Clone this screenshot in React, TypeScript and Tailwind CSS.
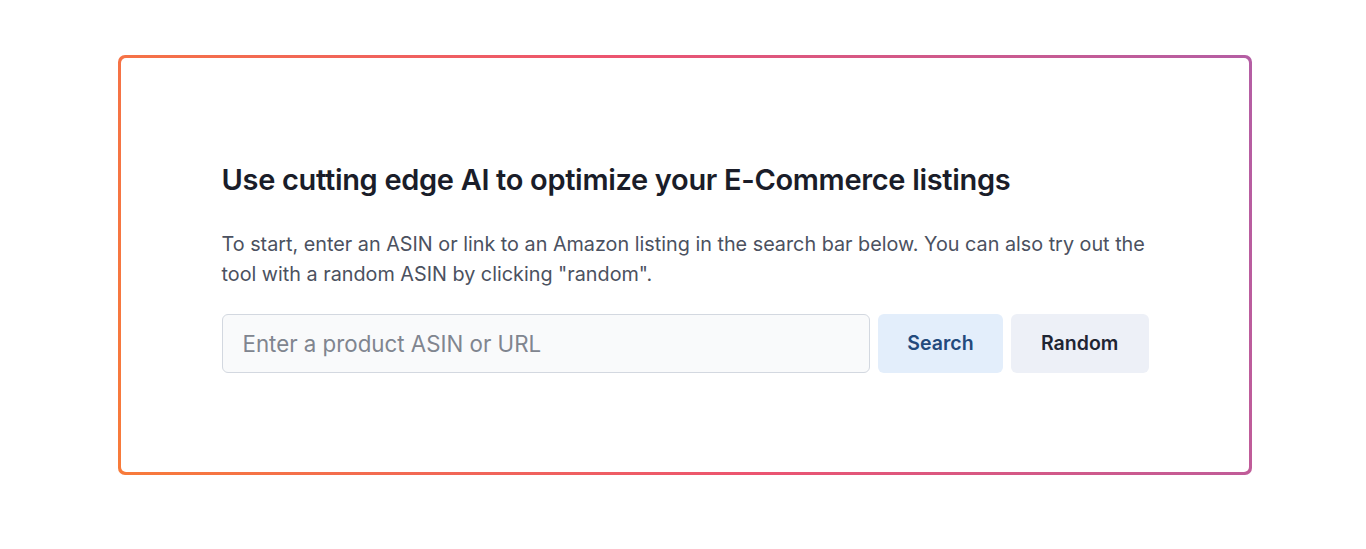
import React from 'react';

export default function App() {
  return (
    <div className="min-h-screen bg-white pt-[55px]" style={{ fontFamily: 'Inter, "Noto Sans", sans-serif' }}>
      {/* Gradient frame */}
      <div className="ml-[118px] w-[1134px] rounded-[7px] bg-linear-[72deg] from-[#f87b3a] via-[#ec5470] to-[#b45ea4] p-[3px]">
        <div className="flex h-[414px] items-center justify-center rounded-[5px] bg-white">
          <div className="w-[927px] pt-[5px]">
            <h1 className="text-[29px] font-semibold leading-9 tracking-[-0.011em] text-[#1a1d29]">
              Use cutting edge AI to optimize your E-Commerce listings
            </h1>
            <p className="mt-[31px] text-[19.8px] leading-[30px] text-[#4b5160]">
              To start, enter an ASIN or link to an Amazon listing in the search bar below. You can also try out the
              tool with a random ASIN by clicking "random".
            </p>
            <div className="mt-[25px] flex gap-2">
              <input
                type="text"
                placeholder="Enter a product ASIN or URL"
                className="h-[59px] w-[650px] rounded-md border border-[#d3d8e0] bg-[#f9fafb] px-5 text-[22.3px] text-gray-800 outline-none placeholder:text-[#80858f]"
              />
              <button className="h-[59px] w-[125px] rounded-md bg-[#e3eefb] text-[19.5px] font-semibold text-[#234a7c]">
                Search
              </button>
              <button className="h-[59px] w-[138px] rounded-md bg-[#edf0f7] text-[19.5px] font-semibold text-[#1f2533]">
                Random
              </button>
            </div>
          </div>
        </div>
      </div>
    </div>
  );
}
